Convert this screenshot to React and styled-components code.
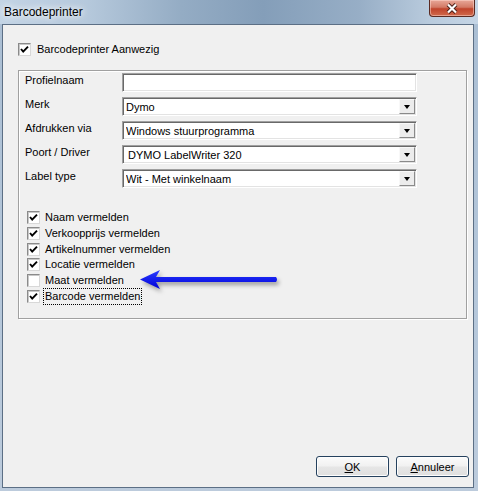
import React from "react";
import styled, { createGlobalStyle } from "styled-components";

const GlobalStyle = createGlobalStyle`
  html, body {
    margin: 0;
    padding: 0;
    background: #b4c6d9;
  }
  body {
    font-family: "Liberation Sans", Arial, sans-serif;
    font-size: 11px;
    color: #000;
  }
`;

const Window = styled.div`
  width: 478px;
  height: 491px;
  display: flex;
  flex-direction: column;
  box-sizing: border-box;
  padding: 0 4px 3px 2px;
  background: linear-gradient(180deg, #aabed3 0%, #b5c7da 60%, #bccbdc 100%);
  overflow: hidden;
`;

const TitleBar = styled.div`
  height: 24px;
  margin: 0 -4px 0 -2px;
  display: flex;
  justify-content: space-between;
  align-items: flex-start;
  background: linear-gradient(
    90deg,
    #c3d4e5 0%,
    #b6c9dc 18%,
    #94acc4 38%,
    #849eb9 55%,
    #97aec6 75%,
    #b9cbdd 90%,
    #c5d5e5 100%
  );
`;

const Title = styled.span`
  font-size: 12px;
  line-height: 24px;
  padding-left: 4px;
  color: #000;
  text-shadow: 0 0 6px #fff, 0 0 10px #fff;
`;

const CloseButton = styled.div`
  width: 46px;
  height: 17px;
  margin-right: 3px;
  box-sizing: border-box;
  border: 1px solid #5a2a22;
  border-top: none;
  border-radius: 0 0 4px 4px;
  background: linear-gradient(180deg, #e8a899 0%, #d37a66 45%, #c0442c 55%, #d06a4c 100%);
  box-shadow: inset 0 0 0 1px rgba(255, 220, 210, 0.5);
  display: flex;
  align-items: center;
  justify-content: center;
`;

const Client = styled.div`
  position: relative;
  flex: 1;
  display: flex;
  flex-direction: column;
  background: #f0f0f0;
  border: 1px solid #5c6f85;
  padding: 16px 0 0 15px;
`;

const CheckRow = styled.label`
  display: flex;
  align-items: center;
  gap: ${(p) => p.$gap || 4}px;
  height: ${(p) => p.$height || 16}px;
`;

const Box = styled.span`
  width: 13px;
  height: 13px;
  box-sizing: border-box;
  border: 1px solid;
  border-color: #8a8a8a #d8d8d8 #d8d8d8 #8a8a8a;
  box-shadow: inset 1px 1px 0 #c8c8c8;
  background: #fff;
  display: flex;
  align-items: center;
  justify-content: center;
  flex: none;
`;

const CheckText = styled.span`
  line-height: 15px;
  padding: 0 1px;
  outline: ${(p) => (p.$focus ? "1px dotted #000" : "none")};
  outline-offset: 0;
`;

const GroupBox = styled.div`
  margin: 13px 6px 0 0;
  width: 447px;
  border: 1px solid #a0a0a0;
  box-shadow: 1px 1px 0 #fff, inset 1px 1px 0 #fff;
  padding: 2px 0 14px 0;
`;

const FormGrid = styled.div`
  display: grid;
  grid-template-columns: 97px 295px;
  grid-auto-rows: 19px;
  row-gap: 5px;
  padding-left: 6px;
`;

const Label = styled.span`
  line-height: 13px;
  padding-top: 1px;
`;

const Field = styled.div`
  height: 19px;
  box-sizing: border-box;
  border: 1px solid;
  border-color: #a0a0a0 #fff #fff #a0a0a0;
  box-shadow: inset 1px 1px 0 #696969, inset -1px -1px 0 #e3e3e3;
  background: #fff;
  display: flex;
  align-items: center;
  padding: 2px 2px 2px ${(p) => p.$indent || 3}px;
`;

const FieldText = styled.span`
  flex: 1;
  line-height: 14px;
  white-space: nowrap;
  overflow: hidden;
`;

const DropButton = styled.span`
  width: 16px;
  height: 15px;
  box-sizing: border-box;
  background: #ececec;
  border: 1px solid;
  border-color: #f8f8f8 #8a8a8a #8a8a8a #f8f8f8;
  display: flex;
  align-items: center;
  justify-content: center;
  margin-right: -1px;
`;

const Triangle = styled.span`
  width: 0;
  height: 0;
  border-left: 3.5px solid transparent;
  border-right: 3.5px solid transparent;
  border-top: 4px solid #000;
`;

const CheckList = styled.div`
  margin-top: 22px;
  padding-left: 8px;
  display: flex;
  flex-direction: column;
`;

const Footer = styled.div`
  margin-top: auto;
  display: flex;
  justify-content: flex-end;
  gap: 7px;
  padding: 0 4px 10px 0;
`;

const Button = styled.button`
  width: 73px;
  height: 21px;
  font-family: inherit;
  font-size: 11px;
  color: #000;
  border: 1px solid #25415e;
  border-radius: 3px;
  background: linear-gradient(180deg, #fbfbfb 0%, #f1f1f1 48%, #e6e6e6 52%, #dfdfdf 100%);
  box-shadow: inset 0 0 0 1px #fdfdfd;
  padding: 0;
  u {
    text-decoration: underline;
  }
`;

const ArrowSvg = styled.svg`
  position: absolute;
  left: 132px;
  top: 241px;
  overflow: visible;
  filter: drop-shadow(2px 3px 2px rgba(0, 0, 0, 0.35));
`;

const Check = ({ checked }) => (
  <Box>
    {checked && (
      <svg width="9" height="9" viewBox="0 0 9 9">
        <polyline
          points="1,4 3.2,6.6 8,1.6"
          fill="none"
          stroke="#000"
          strokeWidth="1.9"
        />
      </svg>
    )}
  </Box>
);

const Combo = ({ value, indent }) => (
  <Field $indent={indent}>
    <FieldText>{value}</FieldText>
    <DropButton>
      <Triangle />
    </DropButton>
  </Field>
);

const options = [
  { label: "Naam vermelden", checked: true },
  { label: "Verkoopprijs vermelden", checked: true },
  { label: "Artikelnummer vermelden", checked: true },
  { label: "Locatie vermelden", checked: true },
  { label: "Maat vermelden", checked: false },
  { label: "Barcode vermelden", checked: true, focus: true },
];

export default function App() {
  return (
    <>
      <GlobalStyle />
      <Window>
        <TitleBar>
          <Title>Barcodeprinter</Title>
          <CloseButton>
            <svg width="14" height="11" viewBox="0 0 14 11">
              <path d="M3 1.5 L11 9.5 M11 1.5 L3 9.5" stroke="#4a1e16" strokeWidth="4" />
              <path d="M3 1.5 L11 9.5 M11 1.5 L3 9.5" stroke="#fff" strokeWidth="2.2" />
            </svg>
          </CloseButton>
        </TitleBar>
        <Client>
          <CheckRow $gap={5}>
            <Check checked />
            <CheckText>Barcodeprinter Aanwezig</CheckText>
          </CheckRow>

          <GroupBox>
            <FormGrid>
              <Label>Profielnaam</Label>
              <Field />
              <Label>Merk</Label>
              <Combo value="Dymo" />
              <Label>Afdrukken via</Label>
              <Combo value="Windows stuurprogramma" />
              <Label>Poort / Driver</Label>
              <Combo value="DYMO LabelWriter 320" indent={5} />
              <Label>Label type</Label>
              <Combo value="Wit - Met winkelnaam" />
            </FormGrid>

            <CheckList>
              {options.map((o) => (
                <CheckRow key={o.label} $height={15.7}>
                  <Check checked={o.checked} />
                  <CheckText $focus={o.focus}>{o.label}</CheckText>
                </CheckRow>
              ))}
            </CheckList>
          </GroupBox>

          <ArrowSvg width="150" height="30" viewBox="0 0 150 30">
            <defs>
              <linearGradient id="arrowFill" x1="0" y1="0" x2="0" y2="1">
                <stop offset="0" stopColor="#2a3cff" />
                <stop offset="1" stopColor="#0000d8" />
              </linearGradient>
            </defs>
            <path
              d="M5 13.5 L25 4 L21 11 H141 Q143 13.5 141 16 H21 L25 23 Z"
              fill="url(#arrowFill)"
            />
          </ArrowSvg>

          <Footer>
            <Button>
              <u>O</u>K
            </Button>
            <Button>
              <u>A</u>nnuleer
            </Button>
          </Footer>
        </Client>
      </Window>
    </>
  );
}
